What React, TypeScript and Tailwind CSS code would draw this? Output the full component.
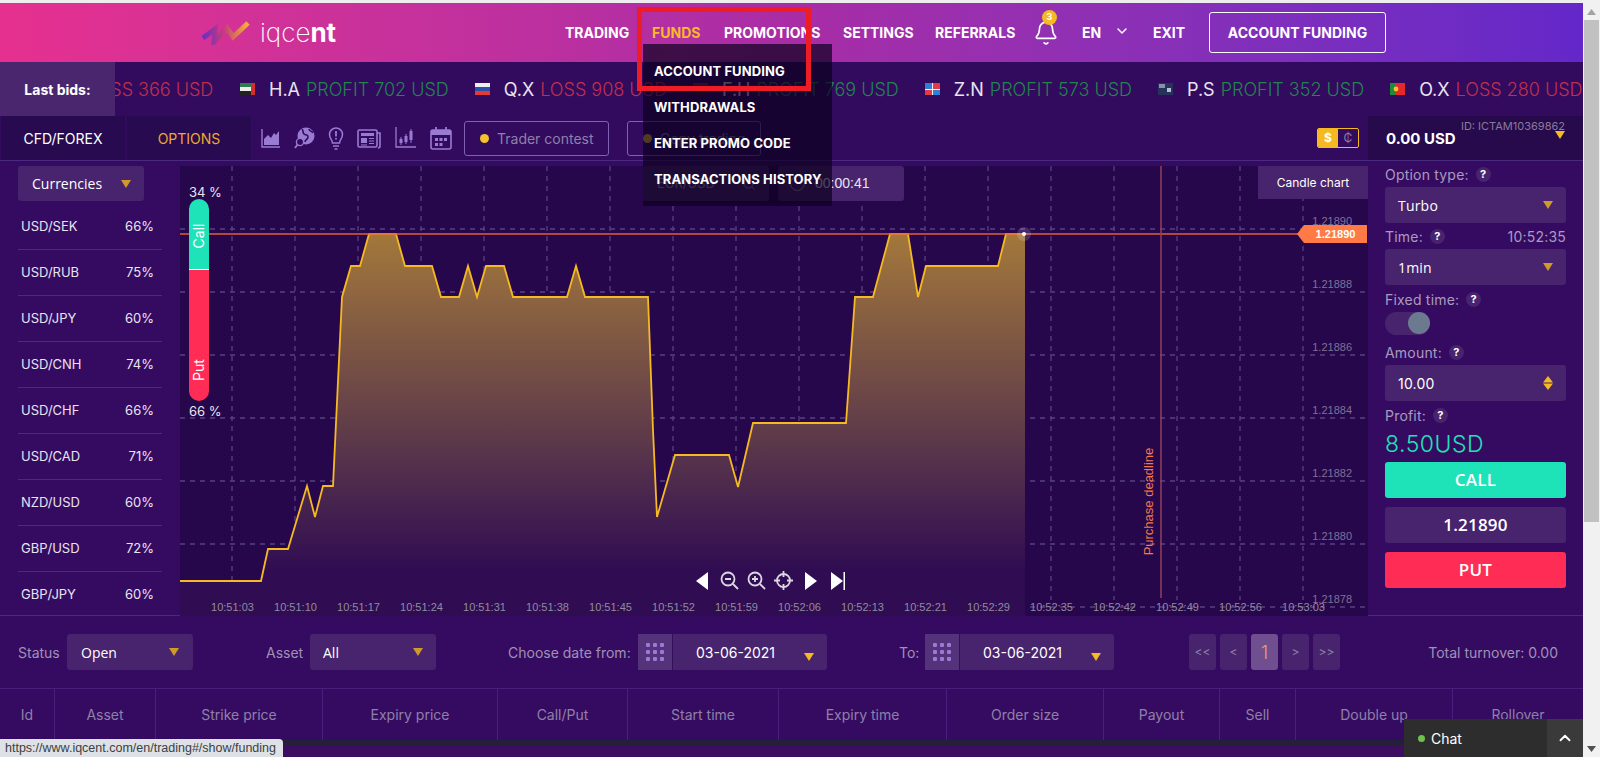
import { Bell, ChevronDown, ChevronUp, Search } from 'lucide-react';

const tickerItems = [
  { flag: 'ae', name: 'H.A', text: 'PROFIT 702 USD', win: true },
  { flag: 'ru', name: 'Q.X', text: 'LOSS 908 USD', win: false },
  { flag: 'fh', name: 'F.H', text: 'PROFIT 769 USD', win: true },
  { flag: 'pa', name: 'Z.N', text: 'PROFIT 573 USD', win: true },
  { flag: 'nz', name: 'P.S', text: 'PROFIT 352 USD', win: true },
  { flag: 'pt', name: 'O.X', text: 'LOSS 280 USD', win: false },
];

const currencies = [
  ['USD/SEK', '66%'],
  ['USD/RUB', '75%'],
  ['USD/JPY', '60%'],
  ['USD/CNH', '74%'],
  ['USD/CHF', '66%'],
  ['USD/CAD', '71%'],
  ['NZD/USD', '60%'],
  ['GBP/USD', '72%'],
  ['GBP/JPY', '60%'],
];

const columns = [
  { label: 'Id', w: 'w-[55px]' },
  { label: 'Asset', w: 'w-[101px]' },
  { label: 'Strike price', w: 'w-[167px]' },
  { label: 'Expiry price', w: 'w-[175px]' },
  { label: 'Call/Put', w: 'w-[130px]' },
  { label: 'Start time', w: 'w-[151px]' },
  { label: 'Expiry time', w: 'w-[168px]' },
  { label: 'Order size', w: 'w-[157px]' },
  { label: 'Payout', w: 'w-[116px]' },
  { label: 'Sell', w: 'w-[76px]' },
  { label: 'Double up', w: 'w-[157px]' },
  { label: 'Rollover', w: 'w-[130px]' },
];

const times = [
  '10:51:03', '10:51:10', '10:51:17', '10:51:24', '10:51:31', '10:51:38', '10:51:45', '10:51:52', '10:51:59',
  '10:52:06', '10:52:13', '10:52:21', '10:52:29', '10:52:35', '10:52:42', '10:52:49', '10:52:56', '10:53:03',
];
const prices = ['1.21890', '1.21888', '1.21886', '1.21884', '1.21882', '1.21880', '1.21878'];

const line =
  '180,581 261,581 268,549 288,549 307,486 315,517 323,486 333,486 342,297 351,266 360,266 369,234 396,234 405,266 432,266 441,297 459,297 468,266 477,297 486,266 504,266 513,297 567,297 576,266 585,297 648,297 653,430 657,517 675,455 729,455 738,487 753,423 846,423 855,297 873,297 890,234 908,234 918,297 926,266 998,266 1006,234 1024,234';

function Flag({ code }: { code: string }) {
  return (
    <svg width="15" height="12" viewBox="0 0 15 12" className="shrink-0">
      {code === 'ae' && (
        <>
          <rect width="15" height="4" fill="#2e7d4f" />
          <rect y="4" width="15" height="4" fill="#eeeeee" />
          <rect y="8" width="15" height="4" fill="#222222" />
          <rect x="11" width="4" height="12" fill="#d32f2f" />
        </>
      )}
      {code === 'ru' && (
        <>
          <rect width="15" height="4" fill="#eeeeee" />
          <rect y="4" width="15" height="4" fill="#2b4fa8" />
          <rect y="8" width="15" height="4" fill="#e53935" />
        </>
      )}
      {code === 'fh' && (
        <>
          <rect width="15" height="12" fill="#8e2430" />
          <rect y="8" width="15" height="4" fill="#3a1030" />
        </>
      )}
      {code === 'pa' && (
        <>
          <rect width="15" height="12" fill="#eeeeee" />
          <rect width="7" height="6" fill="#2f7fd8" />
          <rect x="8" y="0" width="7" height="6" fill="#e53945" />
          <rect x="0" y="7" width="7" height="5" fill="#e53945" />
          <rect x="8" y="7" width="7" height="5" fill="#2f7fd8" />
        </>
      )}
      {code === 'nz' && (
        <>
          <rect width="15" height="12" fill="#26315c" />
          <rect x="1" y="1" width="6" height="4" fill="#8a8fa8" />
          <rect x="9" y="5" width="4" height="4" fill="#b9bdd0" />
        </>
      )}
      {code === 'pt' && (
        <>
          <rect width="6" height="12" fill="#1f8a3d" />
          <rect x="6" width="9" height="12" fill="#e5282a" />
          <circle cx="6" cy="6" r="2.4" fill="#f1c232" />
        </>
      )}
    </svg>
  );
}

function Tri({ className = 'fill-[#cf9a2b]' }: { className?: string }) {
  return (
    <svg width="10" height="8" viewBox="0 0 10 8" className={`shrink-0 ${className}`}>
      <path d="M0 0h10L5 8z" />
    </svg>
  );
}

function Help() {
  return (
    <span className="inline-flex h-[15px] w-[15px] items-center justify-center rounded-full bg-[#47246d] text-[11px] font-bold text-white">
      ?
    </span>
  );
}

function Select({ label, className }: { label: string; className: string }) {
  return (
    <div className={`flex h-[36px] items-center justify-between rounded-[3px] bg-[#47246d] font-['Open_Sans',sans-serif] text-[14px] text-white ${className}`}>
      <span>{label}</span>
      <Tri />
    </div>
  );
}

function DateBox({ className }: { className: string }) {
  return (
    <div className={`flex h-[36px] rounded-[3px] bg-[#47246d] ${className}`}>
      <div className="grid w-[35px] shrink-0 grid-cols-3 content-center justify-items-center gap-[3px] border-r border-[#33105c] bg-[#55337b] px-[8px]">
        {[0, 1, 2, 3, 4, 5, 6, 7, 8].map((n) => (
          <span key={n} className="h-[4px] w-[4px] rounded-[1px] bg-[#9d78d6]" />
        ))}
      </div>
      <span className="ml-[23px] self-center text-[14px] text-white">03-06-2021</span>
      <span className="ml-auto mr-[13px] mt-[10px] self-center">
        <Tri className="fill-[#f5b921]" />
      </span>
    </div>
  );
}

function PageButton({ label, active }: { label: string; active?: boolean }) {
  return (
    <div
      className={`flex h-[36px] w-[27px] items-center justify-center rounded-[3px] ${
        active ? 'bg-[#6f4f90] text-[18px] font-light text-[#f0a060]' : 'bg-[#47246d] text-[12px] text-[#8f80a8]'
      }`}
    >
      {label}
    </div>
  );
}

function ToolIcons() {
  return (
    <div className="ml-[10px] flex items-center gap-[13px] text-[#9a7bd2]">
      <svg width="20" height="24" viewBox="0 0 20 24" fill="none" stroke="currentColor">
        <path d="M1 3v18h18" strokeWidth="1.4" />
        <path d="M3 19v-6l4-4 3 3 3-5 2 2 3-4v14z" fill="currentColor" stroke="none" />
      </svg>
      <svg width="21" height="24" viewBox="0 0 21 24" fill="none" stroke="currentColor">
        <circle cx="12" cy="10" r="8.5" fill="currentColor" stroke="none" />
        <path d="M8 3c2 2 0 3 2 5s4 0 4 3-3 2-3 5M15 3c0 2 3 2 4 4" stroke="#320b5f" strokeWidth="1.6" />
        <circle cx="6" cy="16" r="3.6" fill="#320b5f" strokeWidth="1.3" />
        <path d="M3.5 18.5L1 22" strokeWidth="1.8" />
      </svg>
      <svg width="16" height="24" viewBox="0 0 16 24" fill="none" stroke="currentColor" strokeWidth="1.5">
        <path d="M4.5 17c0-3-3-4.500-3-8.500a6.500 6.500 0 0 1 13 0c0 4-3 5.500-3 8.500z" />
        <path d="M5 20h6M6.500 23h3" />
        <path d="M8 5v5.500M8 12v1.500" strokeWidth="1.8" />
      </svg>
      <svg width="24" height="22" viewBox="0 0 24 22" fill="none" stroke="currentColor">
        <rect x="1" y="3" width="19" height="17" rx="1.500" strokeWidth="1.600" />
        <path d="M20 6h3v13a2 2 0 0 1-2 2" strokeWidth="1.600" />
        <rect x="4" y="6" width="13" height="3" fill="currentColor" stroke="none" />
        <rect x="4" y="11" width="6" height="5" fill="currentColor" stroke="none" />
        <path d="M12 11.500h5M12 14h5M12 16.500h5M4 18h6" strokeWidth="1.200" />
      </svg>
      <svg width="23" height="24" viewBox="0 0 23 24" fill="none" stroke="currentColor">
        <path d="M2 1v20h20" strokeWidth="1.300" />
        <path d="M7 11v8M12 8v10M17 3v14" strokeWidth="1" />
        <rect x="5.500" y="13" width="3" height="4" fill="currentColor" stroke="none" />
        <rect x="10.500" y="10" width="3" height="6" fill="currentColor" stroke="none" />
        <rect x="15.500" y="5" width="3" height="9" fill="currentColor" stroke="none" />
      </svg>
      <svg width="22" height="24" viewBox="0 0 22 24" fill="none" stroke="currentColor">
        <rect x="1" y="4" width="20" height="19" rx="2" strokeWidth="1.600" />
        <rect x="1" y="4" width="20" height="5" fill="currentColor" stroke="none" />
        <path d="M6 1v5M16 1v5" strokeWidth="1.800" />
        <path d="M5 12h3v3H5zM9.500 12h3v3h-3zM14 12h3v3h-3zM5 17h3v3H5zM9.500 17h3v3h-3z" fill="currentColor" stroke="none" />
      </svg>
    </div>
  );
}

function ContestBox({ label, className }: { label: string; className: string }) {
  return (
    <div className={`flex h-[35px] items-center rounded-[3px] border border-[#7f62ad] text-[14px] text-[#8f80a8] ${className}`}>
      <span className="h-[9px] w-[9px] rounded-full bg-[#f6c12c]" />
      <span className="ml-[8px]">{label}</span>
    </div>
  );
}

function Chart() {
  const gridX = Array.from({ length: 18 }, (_, i) => 232 + i * 63);
  const gridY = Array.from({ length: 7 }, (_, i) => 229 + i * 63);
  return (
    <div className="relative mt-[5px] h-[450px] w-[1188px] shrink-0 bg-[#27074c] font-['Liberation_Sans',sans-serif]">
      <svg width="1188" height="450" viewBox="180 166 1188 450" className="block">
        <defs>
          <linearGradient id="fill" gradientUnits="userSpaceOnUse" x1="0" y1="234" x2="0" y2="570">
            <stop offset="0" stopColor="#a3783b" />
            <stop offset="0.6" stopColor="#5e3a4a" />
            <stop offset="1" stopColor="#300d52" />
          </linearGradient>
        </defs>
        {gridX.map((x) => (
          <path key={x} d={`M${x} 166V600`} stroke="#584180" strokeWidth="1.300" strokeDasharray="5 5" />
        ))}
        {gridY.map((y) => (
          <path key={y} d={`M180 ${y}H1367`} stroke="#584180" strokeWidth="1.300" strokeDasharray="5 5" />
        ))}
        <polygon points={`${line} 1025,234 1025,616 180,616`} fill="url(#fill)" />
        <polyline points={line} fill="none" stroke="#f5b921" strokeWidth="1.800" />
        <path d="M180 234H1304" stroke="#e0603a" strokeWidth="1.400" />
        <path d="M1161 166V598" stroke="#93405a" strokeWidth="1.500" />
        <circle cx="1024" cy="234" r="7" fill="#ffffff" opacity="0.15" />
        <circle cx="1024" cy="234" r="2" fill="#ffffff" />
      </svg>

      {/* price and time axes */}
      {prices.map((p, i) => (
        <span
          key={p}
          className={`absolute right-[16px] text-[11px] leading-none text-[#7f7194] ${
            ['top-[50px]', 'top-[113px]', 'top-[176px]', 'top-[239px]', 'top-[302px]', 'top-[365px]', 'top-[428px]'][i]
          }`}
        >
          {p}
        </span>
      ))}
      <div className="absolute left-[21px] top-[436px] flex text-[11px] leading-none text-[#938aa0]">
        {times.map((t) => (
          <span key={t} className="w-[63px] text-center">
            {t}
          </span>
        ))}
      </div>

      {/* call/put sentiment */}
      <span className="absolute left-[9px] top-[20px] font-['Inter',sans-serif] text-[13px] leading-none text-[#e8e4ee]">34 %</span>
      <div className="absolute left-[9px] top-[33px] flex h-[202px] w-[20px] flex-col overflow-hidden rounded-full font-['Inter',sans-serif] text-[14px] text-white">
        <div className="flex h-[71px] items-center justify-center border-b border-white bg-[#1fe3b8] pt-[4px]">
          <span className="-rotate-90 leading-none">Call</span>
        </div>
        <div className="flex flex-1 items-end justify-center bg-[#ff2d55] pb-[24px]">
          <span className="-rotate-90 leading-none">Put</span>
        </div>
      </div>
      <span className="absolute left-[9px] top-[239px] font-['Inter',sans-serif] text-[13px] leading-none text-[#e8e4ee]">66 %</span>

      <div className="absolute right-0 top-0 flex h-[33px] w-[110px] items-center justify-center bg-[#47246d] font-['Inter',sans-serif] text-[12px] text-white">
        Candle chart
      </div>
      <div className="absolute left-[463px] top-0 flex h-[35px] w-[126px] items-center justify-between rounded-[3px] bg-[#47246d] pl-[14px] pr-[13px] font-['Inter',sans-serif] text-[13px] text-[#a99bbd]">
        <span>EUR/USD</span>
        <Search size={14} strokeWidth={1.6} />
      </div>
      <div className="absolute left-[598px] top-0 flex h-[35px] w-[126px] items-center rounded-[3px] bg-[#47246d] pl-[12px] text-[14px] text-[#e8e4ee]">
        <span className="h-[15px] w-[15px] rounded-full border border-[#a99bbd]" />
        <span className="ml-[10px]">00:00:41</span>
      </div>

      <div className="absolute right-[1px] top-[59px] flex h-[18px] w-[63px] items-center justify-center bg-[#ff7a45] text-[11px] font-bold text-white">
        1.21890
      </div>
      <span className="absolute left-[1117px] top-[59px] h-0 w-0 border-y-[9px] border-r-[7px] border-y-transparent border-r-[#ff7a45]" />

      <span className="absolute left-[913px] top-[329px] w-[110px] -rotate-90 whitespace-nowrap text-center text-[13px] leading-none text-[#f07a4a]">
        Purchase deadline
      </span>

      {/* chart controls */}
      <div className="absolute left-[516px] top-[405px] flex h-[19px] items-center text-[#dcd7e4]">
        <svg width="12" height="18" viewBox="0 0 12 18" fill="#ffffff"><path d="M12 0v18L0 9z" /></svg>
        <svg width="19" height="19" viewBox="0 0 19 19" fill="none" stroke="currentColor" strokeWidth="1.800" className="ml-[12px]">
          <circle cx="8" cy="8" r="6.500" /><path d="M5 8h6M13 13l5 5" />
        </svg>
        <svg width="19" height="19" viewBox="0 0 19 19" fill="none" stroke="currentColor" strokeWidth="1.800" className="ml-[8px]">
          <circle cx="8" cy="8" r="6.500" /><path d="M5 8h6M8 5v6M13 13l5 5" />
        </svg>
        <svg width="19" height="19" viewBox="0 0 19 19" fill="none" stroke="currentColor" strokeWidth="1.800" className="ml-[8px]">
          <circle cx="9.500" cy="9.500" r="6.500" /><path d="M9.500 0v6M9.500 13v6M0 9.500h6M13 9.500h6" />
        </svg>
        <svg width="12" height="18" viewBox="0 0 12 18" fill="#ffffff" className="ml-[12px]"><path d="M0 0v18l12-9z" /></svg>
        <svg width="14" height="18" viewBox="0 0 14 18" fill="#ffffff" className="ml-[14px]"><path d="M0 0v18l12-9z" /><path d="M12.500 0h1.500v18h-1.500z" /></svg>
      </div>
    </div>
  );
}

function SidePanel() {
  return (
    <div className="flex w-[215px] flex-col px-[17px] font-['Inter',sans-serif] text-[14px] tracking-[0.2px] text-[#a99bbd]">
      <div className="mt-[5px] flex h-[16px] items-center gap-[7px] whitespace-nowrap">Option type: <Help /></div>
      <Select label="Turbo" className="mt-[5px] px-[13px]" />
      <div className="mt-[5px] flex h-[16px] items-center gap-[7px]">
        Time: <Help /> <span className="ml-auto">10:52:35</span>
      </div>
      <Select label="1min" className="mt-[5px] px-[13px]" />
      <div className="mt-[6px] flex h-[16px] items-center gap-[7px]">Fixed time: <Help /></div>
      <div className="mt-[5px] flex h-[23px] w-[45px] justify-end rounded-full bg-[#47246d]">
        <span className="h-[22px] w-[22px] rounded-full bg-[#6c7a90]" />
      </div>
      <div className="mt-[9px] flex h-[16px] items-center gap-[7px]">Amount: <Help /></div>
      <div className="mt-[5px] flex h-[36px] items-center justify-between rounded-[3px] bg-[#47246d] px-[13px] text-white">
        <span>10.00</span>
        <svg width="10" height="14" viewBox="0 0 10 14" fill="#f5b921"><path d="M5 0l5 6.400H0zM0 7.600h10L5 14z" /></svg>
      </div>
      <div className="mt-[6px] flex h-[16px] items-center gap-[7px]">Profit: <Help /></div>
      <div className="mt-[7px] text-[23px] font-light leading-[28px] tracking-[0.5px] text-[#1fe3b8]">8.50USD</div>
      <div className="mt-[4px] flex h-[36px] items-center justify-center rounded-[3px] bg-[#1fe3b8] font-['Open_Sans',sans-serif] text-[17px] font-semibold text-white">CALL</div>
      <div className="mt-[9px] flex h-[36px] items-center justify-center rounded-[3px] bg-[#47246d] font-['Open_Sans',sans-serif] text-[17px] font-semibold text-white">1.21890</div>
      <div className="mt-[9px] flex h-[36px] items-center justify-center rounded-[3px] bg-[#ff2d55] font-['Open_Sans',sans-serif] text-[17px] font-semibold text-white">PUT</div>
    </div>
  );
}

export default function App() {
  return (
    <div className="relative flex h-[757px] w-[1600px] overflow-hidden bg-white font-['Inter',sans-serif]">
      <div className="flex w-[1583px] shrink-0 flex-col">
        <div className="h-[3px] shrink-0 bg-[#eeeeee]" />

        {/* Header */}
        <header className="flex h-[59px] shrink-0 items-center bg-gradient-to-r from-[#e6308f] via-[#a92ca6] to-[#6427c9] text-white">
          <div className="ml-[202px] flex w-[363px] items-center">
            <svg width="48" height="24" viewBox="0 0 48 24" fill="none" strokeWidth="5">
              <defs>
                <linearGradient id="logo" x1="0" y1="0" x2="1" y2="0">
                  <stop offset="0" stopColor="#6a2fc4" />
                  <stop offset="0.45" stopColor="#c33a7c" />
                  <stop offset="1" stopColor="#f2b233" />
                </linearGradient>
              </defs>
              <path d="M1 17L13 8l-1 13L25 7l6 9L46 2" stroke="url(#logo)" />
            </svg>
            <span className="ml-[10px] text-[26px] font-extralight leading-none">
              iqce<span className="font-bold">nt</span>
            </span>
          </div>
          <nav className="flex items-center whitespace-nowrap text-[14px] font-bold">
            <span className="w-[87px]">TRADING</span>
            <span className="w-[72px] text-[#f9b92c]">FUNDS</span>
            <span className="w-[119px]">PROMOTIONS</span>
            <span className="w-[92px]">SETTINGS</span>
            <span className="w-[98px]">REFERRALS</span>
            <span className="relative w-[49px]">
              <Bell size={26} strokeWidth={1.5} />
              <span className="absolute left-[9px] top-[-10px] flex h-[15px] w-[15px] items-center justify-center rounded-full bg-[#f5b921] text-[9px] text-white">3</span>
            </span>
            <span className="w-[32px]">EN</span>
            <span className="-mt-[4px]"><ChevronDown size={16} strokeWidth={2.2} /></span>
            <span className="ml-[23px] w-[56px]">EXIT</span>
            <span className="flex h-[41px] w-[177px] items-center justify-center rounded-[3px] border border-white">ACCOUNT FUNDING</span>
          </nav>
        </header>

        {/* Last bids */}
        <div className="flex h-[54px] shrink-0 bg-[#320b5f]">
          <div className="z-10 flex w-[115px] shrink-0 items-center justify-center bg-[#49266e] text-[14px] font-bold text-white">Last bids:</div>
          <div className="flex flex-1 items-center overflow-hidden whitespace-nowrap text-[18px] font-light">
            <span className="-ml-[28px] w-[153px] shrink-0 text-[#c0304a]">LOSS 366 USD</span>
            {tickerItems.map((item) => (
              <div key={item.name} className="flex shrink-0 items-center pr-[26px]">
                <Flag code={item.flag} />
                <span className="ml-[14px] font-normal text-[#e8e4ee]">{item.name}</span>
                <span className={`ml-[6px] ${item.win ? 'text-[#23844f]' : 'text-[#c0304a]'}`}>{item.text}</span>
              </div>
            ))}
          </div>
        </div>

        {/* Toolbar */}
        <div className="flex h-[45px] shrink-0 items-stretch border-b border-[#4a2a80] bg-[#320b5f]">
          <div className="ml-[1px] flex w-[124px] items-center justify-center bg-[#270a4f] text-[14px] text-white">CFD/FOREX</div>
          <div className="ml-[2px] flex w-[124px] items-center justify-center bg-[#270a4f] text-[14px] text-[#f0a830]">OPTIONS</div>
          <ToolIcons />
          <div className="ml-[12px] flex items-center">
            <ContestBox label="Trader contest" className="w-[145px] pl-[15px]" />
            <ContestBox label="Copy trading" className="ml-[18px] w-[134px] pl-[15px]" />
          </div>
          <div className="ml-auto mr-[9px] flex items-center">
            <div className="flex h-[20px] w-[42px] overflow-hidden rounded-[2px] border border-[#f5b921] text-[12px] font-bold">
              <span className="flex w-[20px] items-center justify-center bg-[#f5b921] text-white">$</span>
              <span className="flex flex-1 items-center justify-center font-normal text-[#8f80a8]">₵</span>
            </div>
          </div>
          <div className="relative flex w-[215px] shrink-0 items-center bg-[#260a4c] pl-[18px] text-[15px] font-bold text-white">
            <span className="mt-[2px]">0.00 USD</span>
            <span className="absolute right-[18px] top-[2px] text-[11px] font-normal text-[#8a7a9a]">ID: ICTAM10369862</span>
            <span className="absolute right-[18px] top-[15px]"><Tri className="fill-[#f5b921]" /></span>
          </div>
        </div>

        {/* Main row */}
        <div className="flex h-[455px] shrink-0 border-b border-[#4a2a80] bg-[#350b62]">
          <div className="flex w-[180px] shrink-0 flex-col overflow-hidden pl-[18px] font-['Inter',sans-serif] text-[13px] text-[#e8e4ee]">
            <div className="mt-[5px] flex h-[35px] w-[126px] shrink-0 items-center justify-between rounded-[3px] bg-[#47246d] pl-[14px] pr-[13px] font-['Open_Sans',sans-serif] text-[14px] text-white">
              <span>Currencies</span>
              <Tri />
            </div>
            <div className="mt-[3px] w-[144px]">
              {currencies.map(([name, pct], i) => (
                <div
                  key={name}
                  className={`flex h-[46px] items-center justify-between pl-[3px] pr-[8px] ${
                    i < currencies.length - 1 ? 'border-b border-[#4a2a80]' : ''
                  }`}
                >
                  <span>{name}</span>
                  <span>{pct}</span>
                </div>
              ))}
            </div>
          </div>
          <Chart />
          <SidePanel />
        </div>

        {/* Filters */}
        <div className="flex h-[73px] shrink-0 items-center border-b border-[#46207a] bg-[#350b62] text-[14px] text-[#9f92b5]">
          <span className="ml-[18px] w-[49px]">Status</span>
          <Select label="Open" className="w-[126px] px-[14px]" />
          <span className="ml-[73px] w-[44px]">Asset</span>
          <Select label="All" className="w-[126px] px-[13px]" />
          <span className="ml-[72px] w-[130px] whitespace-nowrap">Choose date from:</span>
          <DateBox className="w-[189px]" />
          <span className="ml-[72px] w-[26px]">To:</span>
          <DateBox className="w-[189px]" />
          <div className="ml-[75px] flex gap-[4px]">
            <PageButton label="<<" />
            <PageButton label="<" />
            <PageButton label="1" active />
            <PageButton label=">" />
            <PageButton label=">>" />
          </div>
          <span className="ml-auto mr-[25px]">Total turnover: 0.00</span>
        </div>

        {/* Table head */}
        <div className="flex h-[51px] shrink-0 bg-[#350b62] text-[14px] text-[#8f80a8]">
          {columns.map((col, i) => (
            <div
              key={col.label}
              className={`flex items-center justify-center ${col.w} ${i < columns.length - 1 ? 'border-r border-[#46207a]' : ''}`}
            >
              {col.label}
            </div>
          ))}
        </div>
        <div className="h-[6px] shrink-0 bg-[#25203a]" />
        <div className="flex-1 bg-[#3d0e60]" />
      </div>

      {/* Browser scrollbar */}
      <div className="flex w-[17px] shrink-0 flex-col items-center bg-[#f1f1f1]">
        <svg width="9" height="6" viewBox="0 0 9 6" className="mt-[9px] fill-[#a3a3a3]"><path d="M4.500 0L9 6H0z" /></svg>
        <div className="mt-[5px] h-[502px] w-[15px] bg-[#c1c1c1]" />
        <svg width="9" height="6" viewBox="0 0 9 6" className="mt-auto mb-[5px] fill-[#505050]"><path d="M0 0h9L4.500 6z" /></svg>
      </div>

      {/* Funds dropdown */}
      <div className="absolute left-[643px] top-[44px] z-20 flex h-[162px] w-[189px] flex-col bg-[#0c0020]/70 pl-[11px] pt-[18px] text-[13px] font-bold tracking-[0.1px] text-white">
        <span className="h-[36px] leading-[18px]">ACCOUNT FUNDING</span>
        <span className="h-[36px] leading-[18px]">WITHDRAWALS</span>
        <span className="h-[36px] leading-[18px]">ENTER PROMO CODE</span>
        <span className="h-[36px] whitespace-nowrap leading-[18px]">TRANSACTIONS HISTORY</span>
      </div>

      {/* Annotation box */}
      <div className="absolute left-[637px] top-[7px] z-30 h-[84px] w-[174px] border-[5px] border-[#ee1c25]" />

      {/* Link preview */}
      <div className="absolute bottom-0 left-0 z-30 flex h-[18px] w-[283px] items-center rounded-tr-[4px] bg-[#dee1e6] pl-[5px] font-['Liberation_Sans',sans-serif] text-[12.5px] text-[#3c4043]">
        https://www.iqcent.com/en/trading#/show/funding
      </div>

      {/* Chat widget */}
      <div className="absolute bottom-0 left-[1404px] z-30 flex h-[38px] w-[179px] items-center bg-[#2d2d2d] text-[14px] text-white">
        <span className="ml-[14px] h-[7px] w-[7px] rounded-full bg-[#6cc24a]" />
        <span className="ml-[6px]">Chat</span>
        <span className="ml-auto flex h-full w-[36px] items-center justify-center bg-[#3a3a3a]">
          <ChevronUp size={18} strokeWidth={2.5} />
        </span>
      </div>
    </div>
  );
}
